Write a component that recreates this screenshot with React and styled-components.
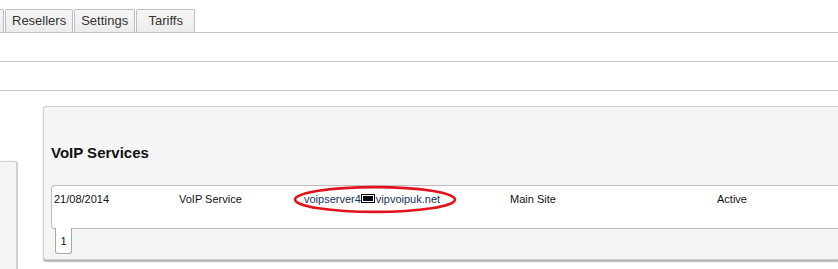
import React from 'react';
import styled, { createGlobalStyle } from 'styled-components';

const GlobalStyle = createGlobalStyle`
    html, body {
        margin: 0;
        padding: 0;
        background: #fff;
        font-family: 'Liberation Sans', Arial, sans-serif;
        overflow: hidden;
    }
`;

const tabs = ['', 'Resellers', 'Settings', 'Tariffs'];

const row = [
    { text: '21/08/2014', width: 125 },
    { text: 'VoIP Service', width: 125 },
    { text: 'voipserver4', host: true, width: 206 },
    { text: 'Main Site', width: 207 },
    { text: 'Active', width: 120 },
];

const App = () => {
    return (
        <Page>
            <GlobalStyle />
            <TabBar>
                {tabs.map((t, i) => (
                    <Tab key={i} $stub={i === 0}>{t}</Tab>
                ))}
            </TabBar>
            <Band />
            <Band />
            <Content>
                <SidePanel />
                <MainPanel>
                    <Title>VoIP Services</Title>
                    <Table>
                        <Row>
                            {row.map((c, i) => (
                                <Cell key={i} $width={c.width}>
                                    {c.host ? (
                                        <Host>
                                            voipserver4<Redact />vipvoipuk.net
                                            <Ring viewBox="0 0 164 28" preserveAspectRatio="none">
                                                <ellipse cx="82" cy="14" rx="80" ry="12" fill="none" stroke="#e3131e" strokeWidth="2.6" />
                                            </Ring>
                                        </Host>
                                    ) : c.text}
                                </Cell>
                            ))}
                        </Row>
                    </Table>
                    <Pager>
                        <PageButton>1</PageButton>
                    </Pager>
                </MainPanel>
            </Content>
        </Page>
    );
};

export default App;

const Page = styled.div`
    width: 838px;
    height: 269px;
    overflow: hidden;
`;

const TabBar = styled.div`
    display: flex;
    align-items: flex-end;
    height: 32px;
    border-bottom: 1px solid #c3c3c8;
`;

const Tab = styled.div`
    box-sizing: border-box;
    height: 23px;
    margin-left: ${(p) => (p.$stub ? '-10px' : '1px')};
    width: ${(p) => (p.$stub ? '14px' : 'auto')};
    padding: 0 ${(p) => (p.$stub ? '0' : '6px')};
    min-width: 59px;
    border: 1px solid #bcbcc4;
    border-bottom: none;
    border-radius: 2px 2px 0 0;
    background: linear-gradient(#f7f7f7, #ececec);
    color: #333;
    font-size: 13px;
    line-height: 21px;
    text-align: center;
    &:first-child {
        min-width: 0;
    }
`;

const Band = styled.div`
    height: 28px;
    border-bottom: 1px solid #c3c3c8;
`;

const Content = styled.div`
    display: flex;
    align-items: flex-start;
    gap: 26px;
`;

const SidePanel = styled.div`
    width: 16px;
    height: 120px;
    margin-top: 70px;
    background: #f5f5f5;
    border: 1px solid #d2d2d2;
    border-left: none;
    border-radius: 0 3px 0 0;
    box-shadow: 1px 0 1px #c8c8c8;
`;

const MainPanel = styled.div`
    flex: 1;
    margin-top: 15px;
    box-sizing: border-box;
    height: 154px;
    padding: 0 0 0 7px;
    background: #f5f5f5;
    border: 1px solid #d0d0d0;
    border-right: none;
    border-radius: 3px 0 0 3px;
    box-shadow: 0 2px 1px #b8b8b8;
`;

const Title = styled.h2`
    margin: 0;
    padding-top: 37px;
    height: 41px;
    font-size: 15px;
    font-weight: bold;
    color: #111;
    line-height: 17px;
`;

const Table = styled.div`
    box-sizing: border-box;
    height: 44px;
    background: #fff;
    border: 1px solid #bdbdbd;
    border-right: none;
    border-radius: 4px 0 0 4px;
`;

const Row = styled.div`
    display: flex;
    padding: 6px 0 0 2px;
    font-size: 11px;
    color: #111;
`;

const Cell = styled.div`
    width: ${(p) => p.$width}px;
    flex: none;
    line-height: 14px;
`;

const Host = styled.span`
    position: relative;
    color: #16325c;
    display: inline-block;
`;

const Redact = styled.span`
    display: inline-block;
    width: 12px;
    height: 7px;
    border: 1px solid #000;
    background: #000;
    box-shadow: inset 0 0 0 1px #fff;
    margin: 0 1px 0 0;
    vertical-align: 0px;
`;

const Ring = styled.svg`
    position: absolute;
    left: -11px;
    top: -7px;
    width: 164px;
    height: 29px;
    overflow: visible;
`;

const Pager = styled.div`
    display: flex;
    padding-left: 4px;
`;

const PageButton = styled.div`
    box-sizing: border-box;
    width: 17px;
    height: 26px;
    margin-top: -1px;
    background: #fff;
    border: 1px solid #a8a8a8;
    border-top: none;
    border-radius: 0 0 3px 3px;
    font-size: 11px;
    line-height: 27px;
    text-align: center;
    color: #111;
`;
